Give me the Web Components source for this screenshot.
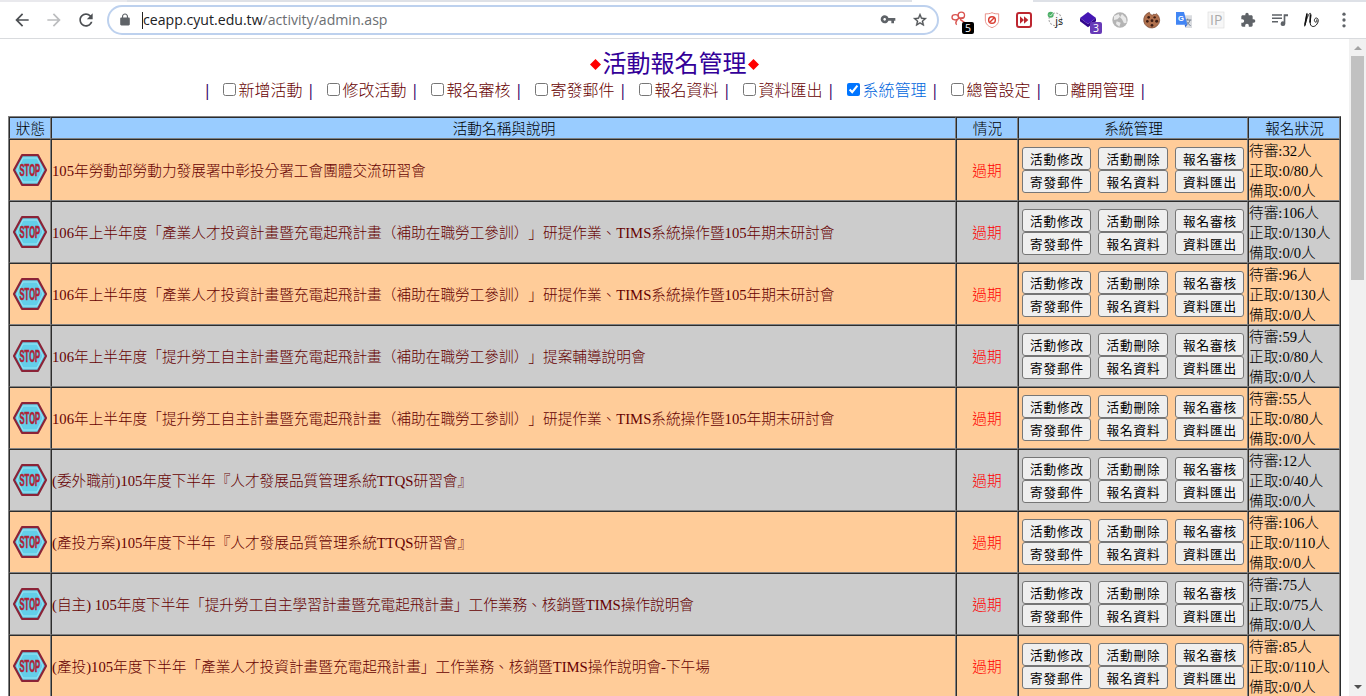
<!DOCTYPE html>
<html lang="zh-Hant">
<head>
<meta charset="utf-8">
<title>活動報名管理</title>
<style>
    html, body {
        margin: 0;
        height: 100%;
        overflow: hidden;
        background: #fff;
    }
    body {
        font-family: "Liberation Serif", "Noto Sans CJK TC", serif;
        font-weight: 300;
        text-spacing-trim: space-all;
    }
</style>
</head>
<body>
<template id="app-window">
    <style>
        :host { display: flex; flex-direction: column; height: 100vh; }
        main { flex: 1; min-height: 0; display: flex; }
        .page { flex: 1; min-width: 0; overflow: hidden; padding: 10px 8px 0; box-sizing: border-box; }
    </style>
    <browser-bar></browser-bar>
    <main>
        <div class="page"><slot></slot></div>
        <scroll-bar></scroll-bar>
    </main>
</template>

<template id="browser-bar">
    <style>
        :host { display: block; height: 39px; box-sizing: border-box; border-bottom: 1px solid #d9dbde; background: #fff; }
        .tabs { display: flex; height: 2px; background: #dee1e7; }
        .tabs i:nth-child(1) { width: 127px; background: #e9e9ed; }
        .tabs i:nth-child(2) { width: 785px; }
        .tabs i:nth-child(3) { width: 121px; background: #fff; }
        .bar { display: flex; align-items: center; height: 36px; }
        .nav { display: flex; gap: 12px; padding-left: 12px; width: 95px; }
        .url {
            display: flex; align-items: center; box-sizing: border-box;
            width: 832px; height: 30px; padding: 0 7px 0 7px;
            border: 2px solid #bdd1ee; border-radius: 15px;
            font: 400 14.12px/20px "Open Sans", sans-serif; color: #6b6e72;
        }
        .caret { width: 1px; height: 17px; background: #222; margin-left: 8px; }
        .url b { font-weight: 400; color: #202124; }
        .addr { flex: 1; white-space: nowrap; }
        .url ui-icon + ui-icon { margin-left: 12px; }
        .ext { display: flex; gap: 12px; padding-left: 11px; }
    </style>
    <div class="tabs"><i></i><i></i><i></i></div>
    <div class="bar">
        <div class="nav">
            <ui-icon name="back"></ui-icon>
            <ui-icon name="forward"></ui-icon>
            <ui-icon name="reload"></ui-icon>
        </div>
        <div class="url">
            <ui-icon name="lock" size="18"></ui-icon>
            <span class="caret"></span>
            <span class="addr"><b>ceapp.cyut.edu.tw</b>/activity/admin.asp</span>
            <ui-icon name="key"></ui-icon>
            <ui-icon name="star"></ui-icon>
        </div>
        <div class="ext">
            <ui-icon name="clip" badge="5"></ui-icon>
            <ui-icon name="shield"></ui-icon>
            <ui-icon name="fast"></ui-icon>
            <ui-icon name="js"></ui-icon>
            <ui-icon name="stack" badge="3" style="--badge:#673ab7"></ui-icon>
            <ui-icon name="globe"></ui-icon>
            <ui-icon name="cookie"></ui-icon>
            <ui-icon name="translate"></ui-icon>
            <ui-icon name="ip"></ui-icon>
            <ui-icon name="puzzle"></ui-icon>
            <ui-icon name="queue"></ui-icon>
            <ui-icon name="script"></ui-icon>
            <ui-icon name="more"></ui-icon>
        </div>
    </div>
</template>

<template id="ui-icon">
    <style>
        :host { display: block; position: relative; flex: none; }
        svg { display: block; overflow: visible; }
        span {
            position: absolute; right: -4px; bottom: -4px; width: 12px; height: 12px;
            border-radius: 2px; background: var(--badge, #000); color: #fff;
            font: 400 10.5px/12px "Open Sans", sans-serif; text-align: center;
        }
    </style>
</template>

<template id="scroll-bar">
    <style>
        :host { display: flex; flex-direction: column; width: 17px; background: #f1f1f1; align-items: center; }
        .thumb { width: 13px; height: 224px; background: #c1c1c1; }
        svg { display: block; width: 17px; height: 17px; }
        .gap { flex: 1; }
    </style>
    <svg viewBox="0 0 17 17"><path d="M5 11l4-4 4 4z" fill="#a3a3a3"/></svg>
    <div class="thumb"></div>
    <div class="gap"></div>
    <svg viewBox="0 0 17 17"><path d="M5 6l4 4 4-4z" fill="#505050"/></svg>
</template>

<template id="page-title">
    <style>
        :host {
            display: flex; justify-content: center; align-items: center; height: 30px;
            font-size: 24px; line-height: 30px; color: #330099;
            font-weight: 400;
        }
        svg { width: 13px; height: 13px; }
    </style>
    <svg viewBox="0 0 13 13"><path d="M5.500 1L11 6.500 5.500 12 0 6.500z" fill="#f00"/></svg>
    <slot></slot>
    <svg viewBox="0 0 13 13"><path d="M6.500 1L12 6.500 6.500 12 1 6.500z" fill="#f00"/></svg>
</template>

<template id="nav-menu">
    <style>
        :host {
            display: flex; justify-content: center; height: 22px; margin-bottom: 15px; padding-left: 1px;
            font-size: 16px; line-height: 23px; color: #330066;
        }
        .bar { width: 3px; font-weight: 700; }
    </style>
    <span class="bar">|</span>
    <slot></slot>
</template>

<template id="nav-item">
    <style>
        :host { display: flex; align-items: center; width: 104px; box-sizing: border-box; padding-left: 14px; color: #660000; }
        :host([checked]) { color: #0066dd; }
        input { margin: 0 3px 2px 0; width: 13px; height: 13px; }
        span { width: 3px; margin-left: 6.5px; color: #330066; font-weight: 700; }
    </style>
    <input type="checkbox"><slot></slot><span>|</span>
</template>

<template id="activity-table">
    <style>
        :host {
            display: block; box-sizing: border-box; width: 1333px;
            border: 1px solid; border-color: #808080 #2c2c2c #2c2c2c #808080;
            font-size: 14.667px; --cols: 42px 905px 62px 230px 92px;
        }
        .head { display: grid; grid-template-columns: var(--cols); height: 22px; background: #99ccff; color: #000; }
        .head div {
            box-sizing: border-box; border: 1px solid; border-color: #2c2c2c #808080 #808080 #2c2c2c;
            text-align: center; line-height: 22px; height: 22px; padding-left: 1px;
        }
    </style>
    <div class="head"><div>狀態</div><div>活動名稱與說明</div><div>情況</div><div>系統管理</div><div>報名狀況</div></div>
    <slot></slot>
</template>

<template id="activity-row">
    <style>
        :host { display: grid; grid-template-columns: var(--cols); height: 62px; background: #ffcc99; }
        :host(:nth-child(even)) { background: #cccccc; }
        .cell {
            box-sizing: border-box; border: 1px solid; border-color: #2c2c2c #808080 #808080 #2c2c2c;
            display: flex; align-items: center; white-space: nowrap; color: #000;
        }
        .icon { justify-content: center; }
        .name { color: #660000; padding-bottom: 2px; }
        .state { color: #f00; justify-content: center; padding-bottom: 2px; }
        .count { display: block; line-height: 20px; padding-top: 1px; height: 62px; }
        .buttons {
            display: grid; grid-template-columns: 69px 70px 69px; grid-auto-rows: 23px; align-items: stretch;
            column-gap: 7px; padding: 0 0 0 3px; align-content: center;
        }
        button {
            margin: 0; padding: 2px 0 0 1px; border: 1px solid #767676; border-radius: 3px; background: #efefef; color: #000;
            font: 400 12.6px/20px "Liberation Sans", "Noto Sans CJK TC", sans-serif; letter-spacing: .9px;
        }
        svg { display: block; }
    </style>
    <div class="cell icon">
        <svg width="36" height="34" viewBox="0 0 36 34">
            <path d="M10 2.2h16L34 17 26 31.8H10L2 17z" fill="#63cfe9" stroke="#8b2337" stroke-width="2.2" stroke-linejoin="round"/>
            <path d="M11 5h14l6 12-6 12H11L5 17z" fill="none" stroke="#9be5f3" stroke-width="1"/>
            <text transform="translate(7.500 23) scale(.45 1)" font-family="Liberation Sans, sans-serif" font-size="17" font-weight="700" fill="#b01f35" stroke="#b01f35" stroke-width=".6">STOP</text>
        </svg>
    </div>
    <div class="cell name"><slot></slot></div>
    <div class="cell state">過期</div>
    <div class="cell buttons">
        <button>活動修改</button><button>活動刪除</button><button>報名審核</button>
        <button>寄發郵件</button><button>報名資料</button><button>資料匯出</button>
    </div>
    <div class="cell count"></div>
</template>

<script>
    const ICONS = {
        back: '<path d="M20 11H7.83l5.59-5.59L12 4l-8 8 8 8 1.41-1.41L7.83 13H20v-2z" fill="#4c4f53"/>',
        forward: '<path d="M12 4l-1.41 1.41L16.17 11H4v2h12.17l-5.58 5.59L12 20l8-8z" fill="#bcbdbf"/>',
        reload: '<path d="M17.65 6.35C16.2 4.9 14.21 4 12 4c-4.42 0-7.99 3.58-7.99 8s3.57 8 7.99 8c3.73 0 6.84-2.55 7.73-6h-2.08c-.82 2.33-3.04 4-5.65 4-3.31 0-6-2.69-6-6s2.69-6 6-6c1.66 0 3.14.69 4.22 1.78L13 11h7V4l-2.35 2.35z" fill="#4c4f53"/>',
        lock: '<path d="M18 8h-1V6c0-2.76-2.24-5-5-5S7 3.240 7 6v2H6c-1.1 0-2 .9-2 2v9c0 1.100.9 2 2 2h12c1.100 0 2-.9 2-2v-9c0-1.100-.9-2-2-2zM8.900 8V6c0-1.710 1.390-3.100 3.100-3.100s3.100 1.390 3.100 3.100v2z" fill="#5f6368"/>',
        key: '<path d="M12.650 9C11.830 6.670 9.610 5 7 5c-3.310 0-6 2.690-6 6s2.690 6 6 6c2.610 0 4.830-1.670 5.650-4H17v4h4v-4h2V9H12.650zM7 13c-1.100 0-2-.9-2-2s.9-2 2-2 2 .9 2 2-.9 2-2 2z" fill="#5f6368"/>',
        star: '<path d="M22 9.240l-7.190-.62L12 2 9.190 8.630 2 9.240l5.460 4.730L5.820 21 12 17.270 18.180 21l-1.630-7.030L22 9.240zM12 15.400l-3.760 2.270 1-4.280-3.320-2.880 4.380-.38L12 6.100l1.710 4.040 4.380.38-3.320 2.880 1 4.280L12 15.400z" fill="#4c4f53" stroke="#4c4f53" stroke-width=".5"/>',
        clip: '<g fill="none" stroke="#d9534f" stroke-width="2"><ellipse cx="5" cy="8" rx="5" ry="4"/><circle cx="14" cy="5" r="4.800"/><path d="M9 10l9-2M8 12c-2 2-3 5-1 7M12 11l7 5"/></g>',
        shield: '<path d="M12 1c3 1.600 6.500 1.900 10 1.700V12c0 6-4.500 9.500-10 11.500C6.500 21.500 2 18 2 12V2.700C5.500 2.900 9 2.600 12 1z" fill="#fff" stroke="#e58a82" stroke-width="1.400"/><circle cx="12" cy="12" r="5" fill="none" stroke="#d93c31" stroke-width="2.200"/><path d="M9 15l6-6" stroke="#d93c31" stroke-width="2"/>',
        fast: '<rect x="1.500" y="1.500" width="21" height="21" rx="3" fill="#fff" stroke="#bd2630" stroke-width="3"/><path d="M6 6.500l6 5.500V6.500l6.500 5.500-6.500 5.500V12l-6 5.500z" fill="#bd2630"/>',
        js: '<circle cx="11" cy="11" r="9.500" fill="#fafafa" stroke="#aaa" stroke-width="1.600" stroke-dasharray="3 2"/><circle cx="4" cy="4" r="4.500" fill="#4caf67"/><path d="M2 4l2 2 3-4" stroke="#c9efd0" fill="none" stroke-width="1.500"/><text x="11" y="20" font-family="Open Sans" font-weight="400" font-size="16" fill="#111">js</text>',
        stack: '<path d="M12 0l12 9-12 9L0 9z" fill="#4516b4"/><path d="M0 9v5l12 9 12-9V9l-12 9z" fill="#32078d"/>',
        globe: '<circle cx="12" cy="12" r="11.500" fill="#b4b4b4"/><path d="M3 6l7-3 2 4-4 4-5 1zM15 3l6 6 1 7-4 1-3-6-3-3zM7 14l6 2-2 6-5-4z" fill="#e9e9e9"/>',
        cookie: '<path d="M8 .5a12 12 0 1 0 15.500 12c0-4-2-8-5-10-1 1.500-2.500 1.500-4 .5-1 3-5 2-6.500-2.500z" fill="#b0714e" stroke="#6e3d28"/><g fill="#3c1d15"><circle cx="7" cy="8" r="2"/><circle cx="16" cy="8" r="1.800"/><circle cx="5" cy="14" r="2"/><circle cx="12" cy="13" r="2.100"/><circle cx="19" cy="14" r="2.200"/><circle cx="12" cy="20" r="2"/></g>',
        translate: '<path d="M9 5h15v19H14z" fill="#dadce0"/><path d="M13 12h10M17.500 10v2M21 12c-1 4-3 6-6 7M15 14l7 7" stroke="#748091" fill="none" stroke-width="1.500"/><path d="M0 0h12l5 19H0z" fill="#4285f4"/><path d="M13 19h4l-3 4z" fill="#3367d6"/><text x="3" y="13" font-family="Liberation Sans" font-weight="700" font-size="11.500" fill="#fff">G</text>',
        ip: '<rect x="0" y="0" width="24" height="24" fill="#f7f7f7" stroke="#ddd"/><text x="3" y="20" font-family="Open Sans" font-weight="400" font-size="21" fill="#aaa">IP</text>',
        puzzle: '<path d="M20.500 11H19V7c0-1.100-.9-2-2-2h-4V3.500a2.500 2.500 0 0 0-5 0V5H4c-1.100 0-2 .9-2 2v3.800h1.500c1.490 0 2.700 1.210 2.700 2.700s-1.210 2.700-2.700 2.700H2V20c0 1.100.9 2 2 2h3.800v-1.500c0-1.490 1.210-2.700 2.700-2.700s2.700 1.210 2.700 2.700V22H17c1.100 0 2-.9 2-2v-4h1.500a2.500 2.500 0 0 0 0-5z" fill="#5f6368"/>',
        queue: '<path d="M0 4.500h15M0 9.500h15M0 14.500h9" stroke="#5f6368" stroke-width="2.200"/><path d="M17.500 3.500H24v3h-4v11a3.500 3.500 0 1 1-2.500-3.300z" fill="#5f6368"/>',
        script: '<path d="M1 21L4.500 2M1.500 20C3 13 7 1 9.500 2c2 1-1 12 0 16 1 5 7 5 10 0 3-4 2-9-1-9s-4 5-1.500 6 2.500-1 2-3" fill="none" stroke="#111" stroke-width="1.400" stroke-linecap="round"/><path d="M1.500 19L4.500 3M9 16l.8-12" stroke="#111" stroke-width="2.400"/>',
        more: '<g fill="#5f6368"><circle cx="12" cy="5" r="2"/><circle cx="12" cy="12" r="2"/><circle cx="12" cy="19" r="2"/></g>'
    }
    // drawn 20px wide; these have their art inset to 16px
    const INSET = ['clip', 'shield', 'fast', 'js', 'stack', 'globe', 'cookie', 'translate', 'ip', 'queue', 'script', 'key', 'star', 'puzzle', 'lock']

    class Base extends HTMLElement {
        constructor() {
            super()
            const template = document.getElementById(this.localName).content
            this.attachShadow({ mode: 'open' }).appendChild(template.cloneNode(true))
        }
    }

    class UiIcon extends Base {
        connectedCallback() {
            const name = this.getAttribute('name')
            const size = this.getAttribute('size') || 20
            const box = INSET.includes(name) ? '-3 -3 30 30' : '0 0 24 24'
            this.shadowRoot.innerHTML += `<svg width="${size}" height="${size}" viewBox="${box}">${ICONS[name]}</svg>`
            if (this.hasAttribute('badge')) {
                this.shadowRoot.innerHTML += `<span>${this.getAttribute('badge')}</span>`
            }
        }
    }

    class NavItem extends Base {
        connectedCallback() {
            this.shadowRoot.querySelector('input').checked = this.hasAttribute('checked')
        }
    }

    class ActivityRow extends Base {
        connectedCallback() {
            const labels = ['待審', '正取', '備取']
            const counts = [this.getAttribute('pending'), this.getAttribute('accepted'), '0/0']
            this.shadowRoot.querySelector('.count').innerHTML =
                labels.map((label, i) => `<div>${label}:${counts[i]}人</div>`).join('')
        }
    }

    customElements.define('ui-icon', UiIcon)
    customElements.define('browser-bar', class extends Base {})
    customElements.define('scroll-bar', class extends Base {})
    customElements.define('page-title', class extends Base {})
    customElements.define('nav-menu', class extends Base {})
    customElements.define('nav-item', NavItem)
    customElements.define('activity-row', ActivityRow)
    customElements.define('activity-table', class extends Base {})
    customElements.define('app-window', class extends Base {})
</script>

<app-window>
    <page-title>活動報名管理</page-title>
    <nav-menu>
        <nav-item>新增活動</nav-item>
        <nav-item>修改活動</nav-item>
        <nav-item>報名審核</nav-item>
        <nav-item>寄發郵件</nav-item>
        <nav-item>報名資料</nav-item>
        <nav-item>資料匯出</nav-item>
        <nav-item checked>系統管理</nav-item>
        <nav-item>總管設定</nav-item>
        <nav-item>離開管理</nav-item>
    </nav-menu>
    <activity-table>
        <activity-row pending="32" accepted="0/80">105年勞動部勞動力發展署中彰投分署工會團體交流研習會</activity-row>
        <activity-row pending="106" accepted="0/130">106年上半年度「產業人才投資計畫暨充電起飛計畫（補助在職勞工參訓）」研提作業、TIMS系統操作暨105年期末研討會</activity-row>
        <activity-row pending="96" accepted="0/130">106年上半年度「產業人才投資計畫暨充電起飛計畫（補助在職勞工參訓）」研提作業、TIMS系統操作暨105年期末研討會</activity-row>
        <activity-row pending="59" accepted="0/80">106年上半年度「提升勞工自主計畫暨充電起飛計畫（補助在職勞工參訓）」提案輔導說明會</activity-row>
        <activity-row pending="55" accepted="0/80">106年上半年度「提升勞工自主計畫暨充電起飛計畫（補助在職勞工參訓）」研提作業、TIMS系統操作暨105年期末研討會</activity-row>
        <activity-row pending="12" accepted="0/40">(委外職前)105年度下半年『人才發展品質管理系統TTQS研習會』</activity-row>
        <activity-row pending="106" accepted="0/110">(產投方案)105年度下半年『人才發展品質管理系統TTQS研習會』</activity-row>
        <activity-row pending="75" accepted="0/75">(自主) 105年度下半年「提升勞工自主學習計畫暨充電起飛計畫」工作業務、核銷暨TIMS操作說明會</activity-row>
        <activity-row pending="85" accepted="0/110">(產投)105年度下半年「產業人才投資計畫暨充電起飛計畫」工作業務、核銷暨TIMS操作說明會-下午場</activity-row>
    </activity-table>
</app-window>
</body>
</html>
